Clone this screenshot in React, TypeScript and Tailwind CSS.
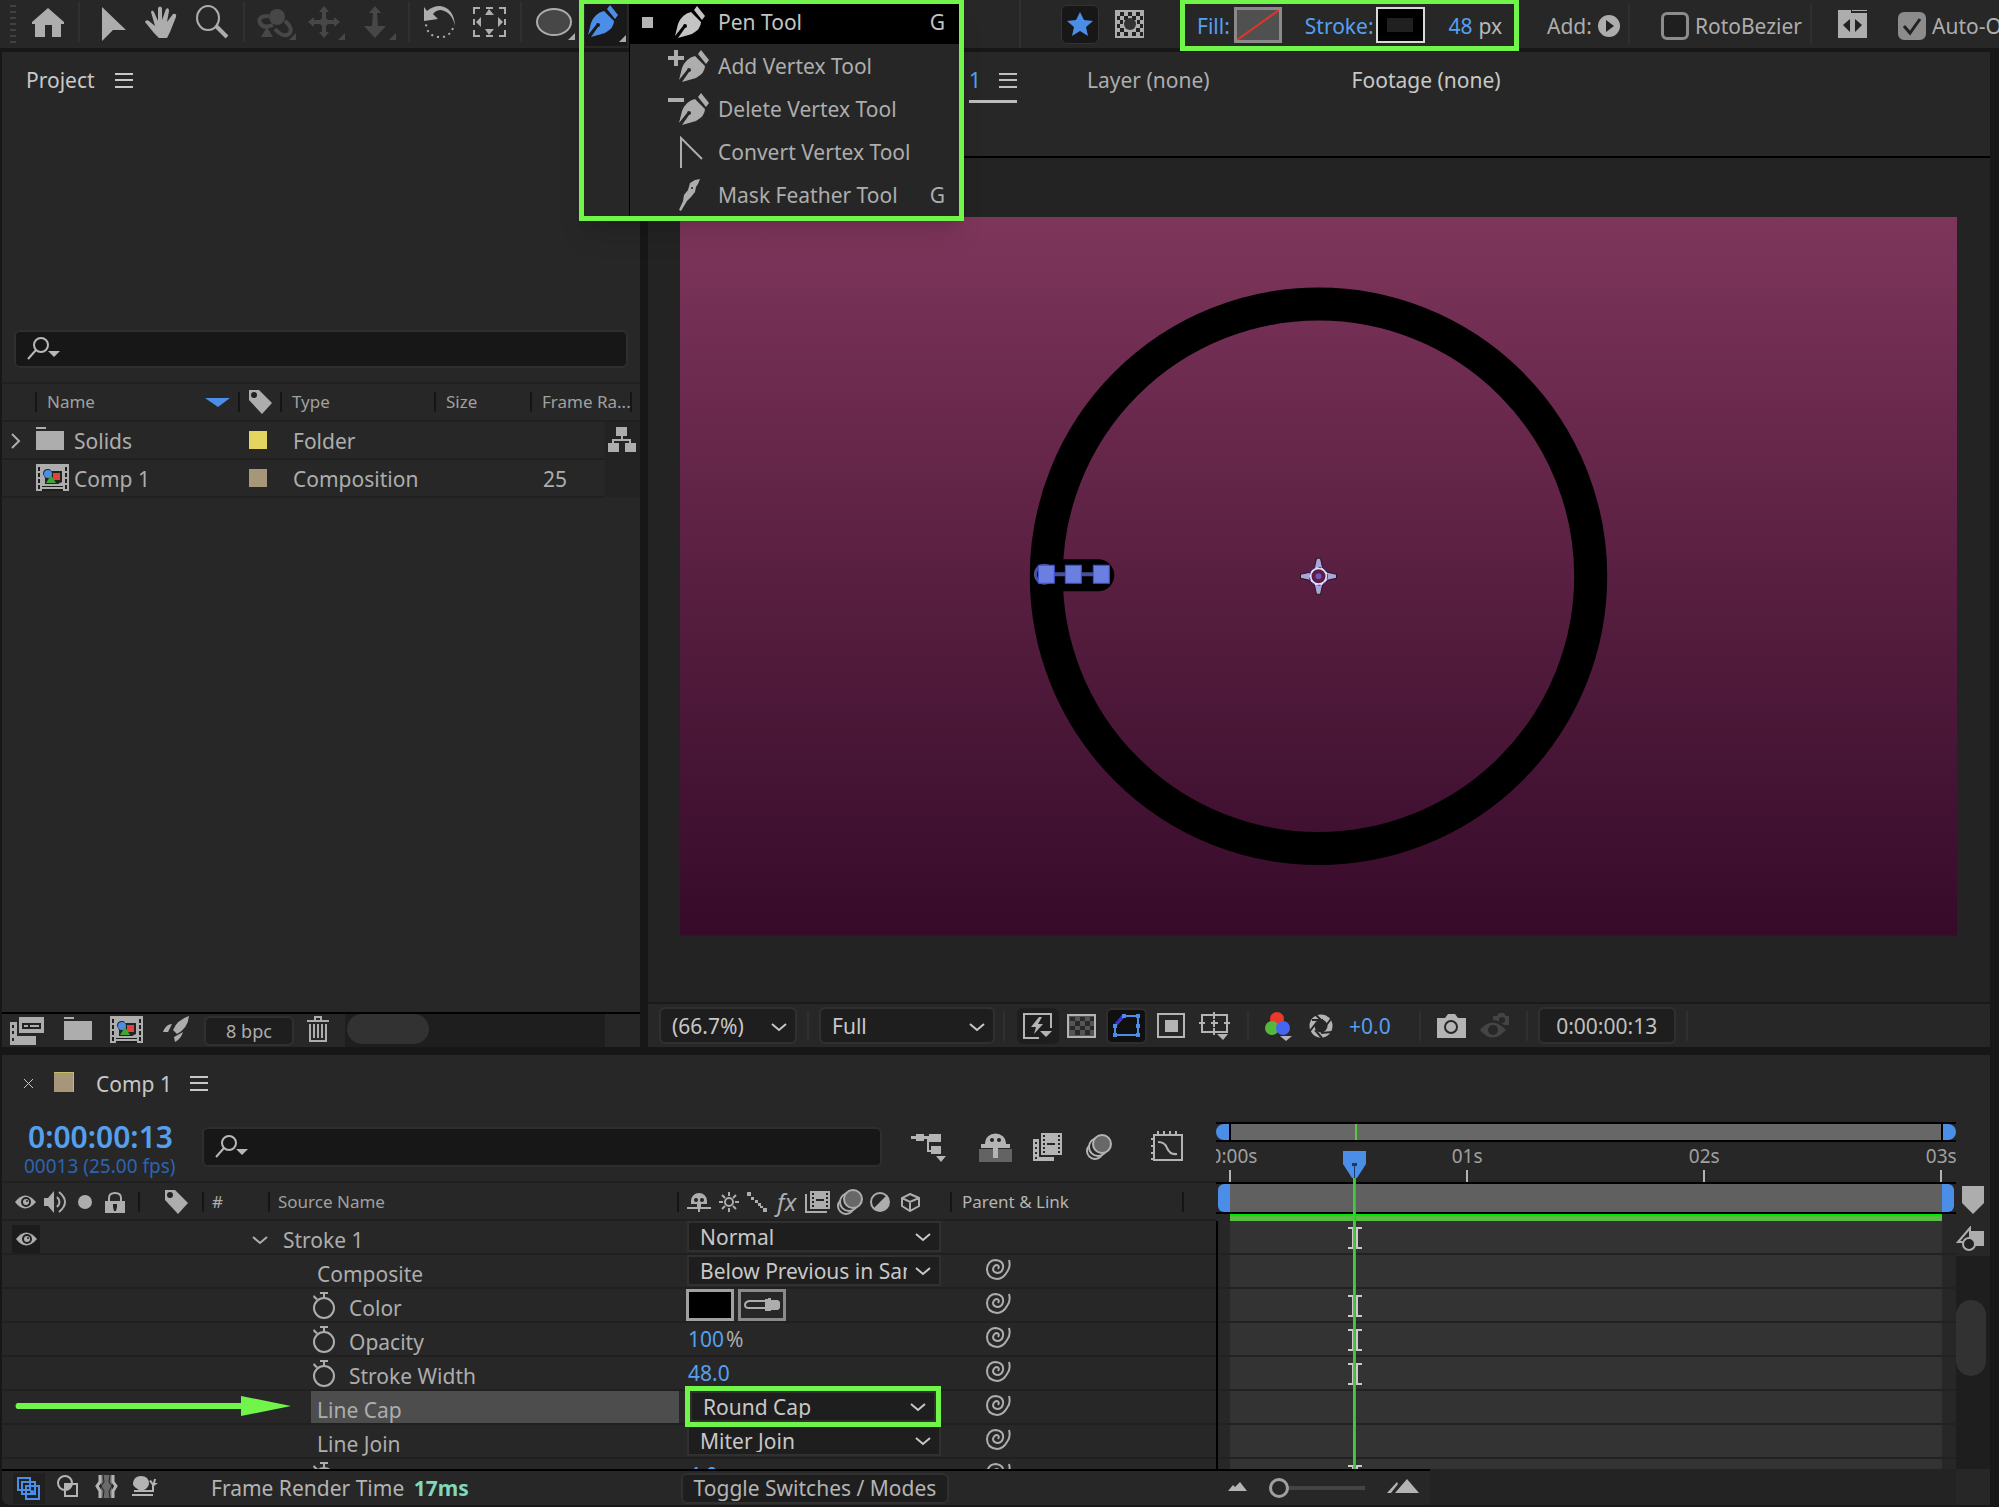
import type { ReactNode } from 'react'
import { clsx } from 'clsx'

interface IconProps {
  w: number
  h: number
  className?: string
  children: ReactNode
}

// Every glyph is drawn in its own pixel box and inherits the text colour
function Icon({ w, h, className, children }: IconProps) {
  return (
    <svg width={w} height={h} viewBox={`0 0 ${w} ${h}`} fill="currentColor" aria-hidden="true" className={clsx('block shrink-0', className)}>
      {children}
    </svg>
  )
}

function Divider({ className }: { className?: string }) {
  return <span className={clsx('w-0.5 shrink-0 bg-[#303030]', className)} />
}

const PenIcon = ({ className }: { className?: string }) => (
  <Icon w={32} h={32} className={className}>
    <path d="M20 4L23 0L31 10L28 14Z" />
    <path d="M17 6L27 16Q27 23 18 28L4 32L11 22A2 2 0 1 0 9 20L1 30L4 18Q8 8 17 6Z" />
  </Icon>
)

const FolderIcon = () => (
  <Icon w={28} h={24}>
    <path d="M0 0H10V2H0ZM0 4H28V23H0Z" />
  </Icon>
)

const CompIcon = () => (
  <Icon w={33} h={27}>
    <path d="M0 0H33V27H0Z" />
    <path d="M2 3h2v4H2zM2 9h2v4H2zM2 15h2v4H2zM2 21h2v4H2zM29 3h2v4h-2zM29 9h2v4h-2zM29 15h2v4h-2zM29 21h2v4h-2zM6 22h21v1H6zM6 25h21v2H6z" fill="#1d1d1d" />
    <path d="M15 7H26V18L22 20H9V14L7 10Q7 5 12 5Q15 5 15 7Z" fill="#222" />
    <path d="M17 9H24V16H17Z" fill="#e0453c" />
    <circle cx="12" cy="10" r="4" fill="#4a8ee6" />
    <path d="M15 11L20 19H10Z" fill="#3fa535" />
  </Icon>
)

const TagIcon = () => (
  <Icon w={25} h={24}>
    <path d="M1 0H11L24 13L14 24L1 10Z" />
    <circle cx="6" cy="5" r="3" fill="#222" />
  </Icon>
)

const EyeIcon = () => (
  <Icon w={21} h={14}>
    <path d="M0 7Q10 -6 21 7Q10 20 0 7Z" />
    <circle cx="11" cy="7" r="5" fill="#222" />
    <circle cx="11" cy="7" r="3" />
    <circle cx="12" cy="6" r="1" fill="#222" />
  </Icon>
)

const SearchIcon = () => (
  <Icon w={34} h={24}>
    <circle cx="14" cy="8" r="7" fill="none" stroke="currentColor" strokeWidth="2" />
    <path d="M9 13L1 22" stroke="currentColor" strokeWidth="2" />
    <path d="M21 14H33L27 20Z" />
  </Icon>
)

const MenuIcon = () => (
  <Icon w={18} h={15}>
    <path d="M0 0H18V2H0ZM0 6H18V8H0ZM0 13H18V15H0Z" />
  </Icon>
)

const ChevronDown = ({ className }: { className?: string }) => (
  <Icon w={16} h={10} className={className}>
    <path d="M1 2L8 8L15 2" fill="none" stroke="currentColor" strokeWidth="2" />
  </Icon>
)

const StopwatchIcon = () => (
  <Icon w={24} h={28}>
    <circle cx="12" cy="17" r="10" fill="none" stroke="currentColor" strokeWidth="2" />
    <path d="M8 1H16V3H13V7H11V3H8ZM2 4L6 8L4 9L1 6Z" />
  </Icon>
)

const SpiralIcon = () => (
  <Icon w={25} h={22}>
    <path
      d="M23 1Q25 8 21 13Q17 20 11 20Q1 19 1 10Q2 1 10 1Q18 2 17 9Q16 14 11 14Q7 13 7 10Q8 6 11 6Q14 7 12 10"
      fill="none"
      stroke="currentColor"
      strokeWidth="2"
    />
  </Icon>
)

const BlurCirclesIcon = () => (
  <Icon w={28} h={28}>
    <g stroke="currentColor" strokeWidth="2">
      <circle cx="10" cy="18" r="8" fill="#272727" />
      <circle cx="13" cy="14" r="9" fill="#272727" />
      <circle cx="17" cy="11" r="9" fill="#686868" />
    </g>
  </Icon>
)

const FramesIcon = () => (
  <Icon w={29} h={28}>
    <path d="M0 6H6V24H21V28H0ZM8 0H29V22H8Z" />
    <path d="M10 2h2v2h-2zM10 6h2v2h-2zM10 10h2v2h-2zM10 14h2v2h-2zM10 18h2v2h-2zM25 2h2v2h-2zM25 6h2v2h-2zM25 10h2v2h-2zM25 14h2v2h-2zM25 18h2v2h-2zM14 10h8v2h-8zM2 9h2v2H2zM2 14h2v2H2zM2 19h2v2H2zM2 24h2v2H2z" fill="#272727" />
  </Icon>
)

const ShyIcon = () => (
  <Icon w={24} h={20}>
    <path d="M4 12V9A8 8 0 0 1 20 9V12H14V15H24V17H13V20H11V17H0V15H10V12Z" />
    <circle cx="9" cy="8" r="2" fill="#222" />
    <circle cx="15" cy="8" r="2" fill="#222" />
  </Icon>
)

/* Toolbar */

interface ToolProps {
  label: string
  className?: string
  children: ReactNode
}

function Tool({ label, className, children }: ToolProps) {
  return (
    <button type="button" aria-label={label} className={clsx('flex h-full shrink-0 items-center justify-center', className)}>
      {children}
    </button>
  )
}

const penTools = [
  { name: 'Pen Tool', shortcut: 'G', active: true },
  { name: 'Add Vertex Tool' },
  { name: 'Delete Vertex Tool' },
  { name: 'Convert Vertex Tool' },
  { name: 'Mask Feather Tool', shortcut: 'G' },
]

function PenToolGlyph({ name }: { name: string }) {
  if (name === 'Pen Tool') return <PenIcon className="ml-1.5" />
  if (name === 'Convert Vertex Tool') {
    return (
      <Icon w={24} h={32} className="ml-3">
        <path d="M1 32V2L22 23" fill="none" stroke="currentColor" strokeWidth="2" />
      </Icon>
    )
  }
  if (name === 'Mask Feather Tool') {
    return (
      <Icon w={24} h={32} className="ml-2.5">
        <path d="M22 0L20 5L18 8L17 13L13 18L9 22L3 32L1 31L5 22L6 16L10 11L12 4L17 1Z" />
        <circle cx="14" cy="9" r="1" fill="#222" />
      </Icon>
    )
  }
  return (
    <div className="flex">
      <Icon w={16} h={32} className="-mr-1.5">
        {name === 'Add Vertex Tool' ? <path d="M6 0H10V6H16V10H10V16H6V10H0V6H6Z" /> : <path d="M0 5H16V9H0Z" />}
      </Icon>
      <PenIcon />
    </div>
  )
}

function PenMenu() {
  return (
    <div className="absolute left-0 top-0 z-20 w-[385px] border-[5px] border-t-4 border-[#72f54a] pl-[45px] shadow-xl">
      <ul role="menu" className="border-l border-black bg-[#262626]">
        {penTools.map((tool) => (
          <li key={tool.name} role="none">
            <button
              type="button"
              role="menuitem"
              className={clsx(
                'flex w-full items-center text-[21px]',
                tool.active ? 'h-10 bg-black pb-1 text-[#c4c4c4]' : 'h-[43px] text-[#adadad]',
              )}
            >
              <span className="flex w-[38px] shrink-0 justify-center">
                {tool.active && <span className="mr-1 size-[11px] bg-[#b4b4b4]" />}
              </span>
              <span className="w-[50px] shrink-0">
                <PenToolGlyph name={tool.name} />
              </span>
              <span className="flex-1 text-left">{tool.name}</span>
              <span className="mr-3.5">{tool.shortcut}</span>
            </button>
          </li>
        ))}
      </ul>
    </div>
  )
}

const Corner = ({ className }: { className?: string }) => (
  <Icon w={7} h={7} className={clsx('mb-2 self-end', className)}>
    <path d="M7 0V7H0Z" />
  </Icon>
)

function Checkbox({ id, label, checked }: { id: string; label: string; checked?: boolean }) {
  return (
    <div className="flex shrink-0 items-center pt-1">
      <span className="relative flex">
        <input
          id={id}
          type="checkbox"
          defaultChecked={checked}
          className="peer size-7 appearance-none rounded-md border-[3px] border-[#8c8c8c] bg-[#1f1f1f] checked:bg-[#8c8c8c]"
        />
        <svg viewBox="0 0 28 28" className="pointer-events-none absolute inset-0 hidden size-7 peer-checked:block" aria-hidden="true">
          <path d="M6 14L12 21L22 7" fill="none" stroke="#222" strokeWidth="3" />
        </svg>
      </span>
      <label htmlFor={id} className="ml-1.5 whitespace-nowrap">
        {label}
      </label>
    </div>
  )
}

function Toolbar() {
  return (
    <header className="relative flex h-12 shrink-0 items-center overflow-visible bg-[#272727] text-[21px] text-[#adadad]">
      <Icon w={6} h={38} className="ml-2.5 text-[#414141]">
        <path d="M0 1H6M0 7H6M0 13H6M0 19H6M0 25H6M0 31H6M0 37H6" stroke="currentColor" strokeWidth="2" />
      </Icon>
      <Tool label="Home" className="ml-4 w-8">
        <Icon w={32} h={29} className="-mt-1">
          <path d="M16 0L32 14V16H29V29H20V17H13V29H3V16H0V14Z" />
        </Icon>
      </Tool>
      <Divider className="mb-1 ml-3.5 h-10" />
      <Tool label="Selection Tool" className="ml-[21px] w-[26px]">
        <Icon w={26} h={34}>
          <path d="M1 0L25 23H12L1 34Z" />
        </Icon>
      </Tool>
      <Tool label="Hand Tool" className="ml-[18px] w-8">
        <Icon w={32} h={32} className="-mt-1">
          <path d="M14 32L9 27L0 16Q1 13 4 15L10 20L6 6Q7 3 9 6L13 15V2Q15 -1 17 2V14L21 3Q24 1 24 5L22 16L28 8Q32 7 31 11L25 26L22 32Z" />
        </Icon>
      </Tool>
      <Tool label="Zoom Tool" className="ml-[18px] w-[34px]">
        <Icon w={34} h={34} className="-mt-1">
          <ellipse cx="13" cy="13" rx="11" ry="12" fill="none" stroke="currentColor" strokeWidth="2" />
          <path d="M21 21L32 32" stroke="currentColor" strokeWidth="4" />
        </Icon>
      </Tool>
      <Divider className="mb-1 ml-3.5 h-10" />
      <div className="flex h-full text-[#474747]">
        <Tool label="Orbit Tool" className="ml-3 w-9">
          <Icon w={36} h={30}>
            <circle cx="20" cy="8" r="8" />
            <path d="M12 7Q0 7 3 14Q6 20 16 16M28 12Q37 20 32 25Q26 29 18 20" fill="none" stroke="currentColor" strokeWidth="4" />
            <path d="M10 18L16 28H4Z" />
          </Icon>
        </Tool>
        <Corner className="-ml-1" />
        <Tool label="Pan Camera Tool" className="ml-2.5 w-9">
          <Icon w={32} h={32} className="-mt-1">
            <path d="M16 0L21 6H18V12Q20 14 20 14H26V11L32 16L26 21V18H20Q18 20 18 20V26H21L16 32L11 26H14V20L12 18H6V21L0 16L6 11V14H12L14 12V6H11Z" />
          </Icon>
        </Tool>
        <Corner className="-ml-1" />
        <Tool label="Dolly Tool" className="ml-3 w-9">
          <Icon w={22} h={32} className="-mt-1">
            <path d="M11 0L17 7H13L14 20H22L11 32L0 20H8L9 7H5Z" />
          </Icon>
        </Tool>
        <Corner className="-ml-1" />
      </div>
      <Divider className="mb-1 ml-3 h-10" />
      <Tool label="Rotate Tool" className="ml-3 w-[34px]">
        <Icon w={33} h={33} className="-mt-1">
          <path d="M1 1L4 5Q10 0 17 0Q31 2 32 20Q29 6 18 4Q13 4 10 8L15 13L1 15Z" />
          <path d="M30 22Q26 32 16 31Q4 30 3 18" fill="none" stroke="currentColor" strokeWidth="2" strokeDasharray="2 4" />
        </Icon>
      </Tool>
      <Tool label="Pan Behind Tool" className="ml-4 w-[34px]">
        <Icon w={33} h={30} className="-mt-1">
          <path d="M1 7V1H7M13 1H20M26 1H32V7M32 12V18M32 23V29H26M20 29H13M7 29H1V23M1 18V12" fill="none" stroke="currentColor" strokeWidth="2" />
          <path d="M16 2L21 8H12ZM16 28L21 22H12ZM3 15L8 10V20ZM30 15L25 10V20Z" />
        </Icon>
      </Tool>
      <Divider className="mb-1 ml-3.5 h-10" />
      <Tool label="Ellipse Tool" className="ml-3.5 w-9">
        <Icon w={36} h={30} className="-mt-1">
          <ellipse cx="18" cy="15" rx="17" ry="13" fill="#474747" stroke="currentColor" strokeWidth="2" />
        </Icon>
      </Tool>
      <Corner className="-ml-1" />

      {/* Pen tool with its flyout open */}
      <div className="relative ml-1 h-full w-[440px]">
        <div className="ml-1.5 flex h-[46px] w-[42px] items-center bg-[#191919] pb-1 pl-0.5 text-[#4b8ee8]">
          <PenIcon />
          <Corner className="mb-0! text-[#aaa]" />
        </div>
        <PenMenu />
      </div>
      <Divider className="h-full" />

      <Tool label="Snapping" className="ml-10 w-[38px]">
        <span className="flex h-[39px] w-full items-center justify-center rounded-md border border-[#333] bg-[#171717] text-[#4b8ee8]">
          <Icon w={26} h={24}>
            <path d="M13 0L17 8L26 9L19 15L21 24L13 19L5 24L7 15L0 9L9 8Z" />
          </Icon>
        </span>
      </Tool>
      <Tool label="Snap to features" className="ml-4 w-[29px]">
        <Icon w={29} h={28}>
          <path d="M0 0H29V28H0Z" />
          <path d="M5 2h4v4H5zM13 2h4v4h-4zM21 2h4v4h-4zM2 6h3v4H2zM9 6h4v4H9zM17 6h4v4h-4zM25 6h3v4h-3zM5 10h3v4H5zM22 10h3v4h-3zM2 14h3v4H2zM25 14h3v4h-3zM5 18h4v4H5zM21 18h4v4h-4zM9 22h4v4H9zM17 22h4v4h-4zM25 22h3v4h-3zM2 22h3v4H2z" fill="#222" />
          <circle cx="15" cy="14" r="6" fill="#333" />
        </Icon>
      </Tool>

      <div className="z-10 ml-9 mb-[-3px] flex h-[51px] w-[339px] shrink-0 items-center border-[5px] border-t-4 border-[#72f54a] pl-3 pt-px text-[#55a0ee]">
        <button type="button">Fill:</button>
        <button type="button" aria-label="Fill colour" className="mb-0.5 ml-1 border-[3px] border-[#8a8a8a] bg-[#505050]">
          <svg viewBox="0 0 42 30" className="block h-[30px] w-[42px]" aria-hidden="true">
            <path d="M0 30L42 0" stroke="#e0352b" strokeWidth="2" />
          </svg>
        </button>
        <button type="button" className="ml-[23px]">
          Stroke:
        </button>
        <button type="button" aria-label="Stroke colour" className="mb-0.5 ml-0.5 flex h-9 w-[49px] items-center justify-center border-2 border-[#dadada] bg-black">
          <span className="h-3.5 w-[26px] bg-[#202020]" />
        </button>
        <button type="button" className="ml-6">
          48
        </button>
        <span className="ml-1.5 text-[#b8b8b8]">px</span>
      </div>

      <span className="ml-7 pt-1">Add:</span>
      <Tool label="Add" className="ml-1.5 w-[22px] pt-1">
        <Icon w={22} h={22}>
          <circle cx="11" cy="11" r="11" />
          <path d="M8 5L16 11L8 17Z" fill="#222" />
        </Icon>
      </Tool>
      <Divider className="ml-2 h-10" />
      <div className="ml-[31px]">
        <Checkbox id="rotobezier" label="RotoBezier" />
      </div>
      <Divider className="ml-2 h-10" />
      <Tool label="Mirror" className="ml-[26px] w-[29px]">
        <Icon w={29} h={28}>
          <path d="M0 0H13V3H29V28H0ZM14 0H29V1H14Z" />
          <path d="M12 9V22L5 15ZM17 9L24 15L17 22Z" fill="#222" />
        </Icon>
      </Tool>
      <div className="ml-[31px] min-w-0 flex-1 overflow-hidden">
        <Checkbox id="auto-open" label="Auto-Open Panels" checked />
      </div>
    </header>
  )
}

/* Project panel */

function SearchBox({ label, className }: { label: string; className?: string }) {
  return (
    <div className={clsx('flex items-center rounded-md border-2 border-[#2e2e2e] bg-[#171717] pl-[11px] text-[#b8b8b8]', className)}>
      <SearchIcon />
      <input type="search" aria-label={label} className="h-full min-w-0 flex-1 bg-transparent px-2 text-[21px] outline-none" />
    </div>
  )
}

const projectItems = [
  { name: 'Solids', type: 'Folder', rate: '', swatch: 'bg-[#e2d661]', folder: true },
  { name: 'Comp 1', type: 'Composition', rate: '25', swatch: 'bg-[#a69779]', folder: false },
]

function ProjectPanel() {
  return (
    <section className="flex w-[638px] shrink-0 flex-col bg-[#272727] text-[#adadad]">
      <div className="flex h-[56px] items-center gap-5 pl-6 text-[21px] text-[#c8c8c8]">
        <h2>Project</h2>
        <button type="button" aria-label="Project panel menu">
          <MenuIcon />
        </button>
      </div>
      <SearchBox label="Search project" className="ml-3 mr-3 mt-[222px] h-[38px] shrink-0" />
      <div className="mt-3.5 flex flex-1">
        <table className="h-fit w-full table-fixed border-collapse text-left text-[21px]">
          <colgroup>
            <col className="w-[33px]" />
            <col className="w-[203px]" />
            <col className="w-[42px]" />
            <col className="w-[154px]" />
            <col className="w-[96px]" />
            <col className="w-[75px]" />
            <col />
          </colgroup>
          <thead>
            <tr className="h-[38px] border-y-2 border-[#202020] text-[17px] text-[#a0a0a0] *:p-0 *:font-normal">
              <th />
              <th>
                <div className="flex h-5 items-center justify-between border-l-2 border-[#151515] pl-2.5 pr-2">
                  Name
                  <Icon w={25} h={9} className="text-[#4b8ee8]">
                    <path d="M0 0H25L13 9Z" />
                  </Icon>
                </div>
              </th>
              <th>
                <div className="flex h-5 items-center border-l-2 border-[#151515] pl-2 text-[#adadad]">
                  <TagIcon />
                </div>
              </th>
              <th>
                <div className="flex h-5 items-center border-l-2 border-[#151515] pl-2.5">Type</div>
              </th>
              <th>
                <div className="flex h-5 items-center border-l-2 border-[#151515] pl-2.5">Size</div>
              </th>
              <th colSpan={2}>
                <div className="mr-2 flex h-5 items-center whitespace-nowrap border-x-2 border-[#151515] pl-2.5">Frame Ra...</div>
              </th>
            </tr>
          </thead>
          <tbody>
            {projectItems.map((item) => (
              <tr key={item.name} className="h-[38px] *:border-b-2 *:border-[#202020] *:p-0 *:pt-0.5">
                <td>
                  {item.folder && (
                    <button type="button" aria-label="Expand Solids" className="ml-[9px] block">
                      <Icon w={10} h={16}>
                        <path d="M1 1L8 8L1 15" fill="none" stroke="currentColor" strokeWidth="2" />
                      </Icon>
                    </button>
                  )}
                </td>
                <td>
                  <div className="flex items-center pl-px">
                    <span className="mb-1 flex w-[38px]">{item.folder ? <FolderIcon /> : <CompIcon />}</span>
                    {item.name}
                  </div>
                </td>
                <td>
                  <span className={clsx('mb-0.5 ml-[11px] block size-[18px]', item.swatch)} />
                </td>
                <td className="whitespace-nowrap">
                  <span className="ml-[13px]">{item.type}</span>
                </td>
                <td />
                <td>
                  <span className="ml-[13px]">{item.rate}</span>
                </td>
                <td className="border-none! bg-[#232323]">
                  {item.folder && (
                    <Icon w={28} h={25} className="mb-1 ml-[3px]">
                      <path d="M8 0H19V9H8ZM0 16H11V25H0ZM17 16H28V25H17Z" />
                      <path d="M14 8V12M5 17V13H22V17" fill="none" stroke="currentColor" strokeWidth="2" />
                    </Icon>
                  )}
                </td>
              </tr>
            ))}
          </tbody>
        </table>
      </div>
      <div className="flex h-[35px] shrink-0 border-t-2 border-black">
        <div className="flex w-[343px] items-center pl-2">
          <Icon w={34} h={28}>
            <path d="M9 0H34V16H9ZM0 5H7V19H26V28H0Z" />
            <path d="M12 6H31V12H12ZM2 8h2v3H2zM2 14h2v3H2zM2 21h2v3H2z" fill="#222" />
            <path d="M14 8H18V10H14ZM20 8H29V10H20Z" />
          </Icon>
          <span className="mb-1 ml-5">
            <FolderIcon />
          </span>
          <span className="mb-0.5 ml-[18px]">
            <CompIcon />
          </span>
          <Icon w={27} h={26} className="mb-1 ml-5">
            <path d="M26 0Q25 12 14 18L10 14Q14 4 26 0ZM9 8L5 16H0Q3 8 9 8ZM20 16Q18 23 12 26L11 21Z" />
          </Icon>
          <button type="button" className="ml-3.5 h-[30px] w-[90px] rounded-md border-2 border-[#303030] bg-[#1e1e1e] text-[18px] leading-none">
            8 bpc
          </button>
          <Icon w={22} h={26} className="mb-1 ml-[13px]">
            <path d="M0 4H7V0H15V4H22V6H0ZM9 2V4H13V2ZM2 8H4V24H18V8H20V26H2ZM6 8H8V22H6ZM10 8H12V22H10ZM14 8H16V22H14Z" fillRule="evenodd" />
          </Icon>
        </div>
        <div className="flex-1 bg-[#1e1e1e]">
          <div className="ml-0.5 h-[30px] w-[82px] rounded-full bg-[#323232]" />
        </div>
        <div className="w-[35px]" />
      </div>
    </section>
  )
}

/* Viewer */

function Composition() {
  return (
    <svg viewBox="0 0 1276 718" className="block w-full" role="img" aria-label="Composition view">
      <defs>
        <linearGradient id="backdrop" x1="0" y1="0" x2="0" y2="1">
          <stop offset="0" stopColor="#7e365b" />
          <stop offset="0.25" stopColor="#6b2a4e" />
          <stop offset="0.5" stopColor="#591f41" />
          <stop offset="0.75" stopColor="#471535" />
          <stop offset="1" stopColor="#370a2a" />
        </linearGradient>
      </defs>
      <rect width="1276" height="718" fill="url(#backdrop)" />
      <circle cx="638" cy="359" r="272" fill="none" stroke="#000" strokeWidth="33" />
      <path d="M366 358H418" stroke="#000" strokeWidth="32" strokeLinecap="round" />
      {/* selected path vertices */}
      <circle cx="364" cy="357" r="9" fill="none" stroke="#4a5590" strokeWidth="3" />
      <path d="M366 357H420" stroke="#46519a" strokeWidth="4" />
      <path d="M358 348H374V366H358ZM385 348H401V366H385ZM413 348H429V366H413Z" fill="#6b7fe0" stroke="#3f4fe0" />
      {/* anchor point */}
      <g transform="translate(638 359)">
        <path d="M-2 -18H2L4 -9L9 -4L18 -2V2L9 4L4 9L2 18H-2L-4 9L-9 4L-18 2V-2L-9 -4L-4 -9Z" fill="#a9a6d8" stroke="#2b1626" />
        <circle r="8" fill="#5a1f44" stroke="#e9e4f4" strokeWidth="2" />
        <circle r="9" fill="none" stroke="#5a35c8" strokeDasharray="3 3" />
        <circle r="3" fill="#7353b8" />
      </g>
    </svg>
  )
}

function Dropdown({ label, options, className }: { label: string; options: string[]; className?: string }) {
  return (
    <span className={clsx('relative flex shrink-0', className)}>
      <select
        aria-label={label}
        className="size-full appearance-none rounded-[inherit] border-2 border-[#303030] bg-[#1e1e1e] pl-[11px] pr-8 pt-0.5 text-[21px] leading-none text-[#c8c8c8]"
      >
        {options.map((option) => (
          <option key={option}>{option}</option>
        ))}
      </select>
      <ChevronDown className="pointer-events-none absolute right-2.5 top-1/2 -mt-1 text-[#c8c8c8]" />
    </span>
  )
}

function ViewerControls() {
  return (
    <div className="flex h-[45px] shrink-0 items-center overflow-hidden border-t-2 border-[#1a1a1a] pl-[11px] text-[21px] text-[#b4b4b4]">
      <Dropdown label="Magnification" options={['(66.7%)', '50%', '100%']} className="h-[37px] w-[138px] rounded-md" />
      <Divider className="mx-2.5 h-[30px]" />
      <Dropdown label="Resolution" options={['Full', 'Half', 'Third']} className="h-[37px] w-[176px] rounded-md" />
      <Divider className="ml-2 mr-3 h-[30px]" />
      <button type="button" aria-label="Fast previews" className="flex h-9 w-[42px] items-center justify-center rounded-md bg-[#1e1e1e]">
        <Icon w={30} h={26}>
          <path d="M28 15V1H1V25H16" fill="none" stroke="currentColor" strokeWidth="2" />
          <path d="M16 4L8 14H13L11 21L20 11H15L19 4ZM17 18H29L23 24Z" />
        </Icon>
      </button>
      <button type="button" aria-label="Transparency grid" className="ml-2">
        <Icon w={29} h={24}>
          <path d="M1 1H28V23H1Z" fill="#555" stroke="currentColor" strokeWidth="2" />
          <path d="M3 3h5v4H3zM13 3h5v4h-5zM23 3h4v4h-4zM8 7h5v5H8zM18 7h5v5h-5zM3 12h5v4H3zM13 12h5v4h-5zM23 12h4v4h-4zM8 16h5v5H8zM18 16h5v5h-5z" fill="#2a2a2a" />
        </Icon>
      </button>
      <button type="button" aria-label="Mask visibility" className="ml-2.5 flex h-9 w-[41px] items-center justify-center rounded-md border-2 border-[#2e2e2e] bg-[#101010]">
        <Icon w={29} h={26} className="text-[#4b8ee8]">
          <path d="M12 3H26V22H3V13Z" fill="none" stroke="currentColor" strokeWidth="2" />
          <path d="M4 11L11 3" stroke="#3a30d8" strokeWidth="3" />
          <path d="M10 1h4v4h-4zM24 1h4v4h-4zM24 11h4v4h-4zM1 11h4v4H1zM1 20h4v4H1zM24 20h4v4h-4z" />
        </Icon>
      </button>
      <button type="button" aria-label="Region of interest" className="ml-2.5">
        <Icon w={28} h={25}>
          <path d="M1 1H27V24H1Z" fill="none" stroke="currentColor" strokeWidth="2" />
          <path d="M8 7H21V19H8Z" />
        </Icon>
      </button>
      <button type="button" aria-label="Grid and guides" className="ml-3.5">
        <Icon w={32} h={28}>
          <path d="M3 3H28V20H3ZM15 0V7M15 16V23M0 11H6M25 11H31M12 11H19M15 8V15" fill="none" stroke="currentColor" strokeWidth="2" />
          <path d="M18 22H29L24 28Z" />
        </Icon>
      </button>
      <Divider className="mx-4 h-[30px]" />
      <button type="button" aria-label="Channels">
        <Icon w={28} h={30}>
          <circle cx="12" cy="8" r="7" fill="#e8392a" />
          <circle cx="7" cy="17" r="7" fill="#55b83c" />
          <circle cx="18" cy="17" r="7" fill="#4666f0" />
          <path d="M15 25H27L21 30Z" />
        </Icon>
      </button>
      <button type="button" aria-label="Reset exposure" className="ml-4">
        <Icon w={24} h={26}>
          <circle cx="12" cy="13" r="9" fill="none" stroke="currentColor" strokeWidth="5" />
          <path d="M6 1L14 9M22 6L15 15M23 19L12 20M13 25L6 17M1 18L8 9M3 7L14 7" stroke="#272727" strokeWidth="2" />
        </Icon>
      </button>
      <button type="button" className="ml-4 pt-px text-[#55a0ee]">
        +0.0
      </button>
      <Divider className="ml-7 h-[30px]" />
      <button type="button" aria-label="Take snapshot" className="ml-4">
        <Icon w={29} h={24}>
          <path d="M0 4H8L11 0H18L21 4H29V24H0Z" />
          <circle cx="14" cy="13" r="6" fill="none" stroke="#272727" strokeWidth="2" />
        </Icon>
      </button>
      <button type="button" aria-label="Show snapshot" className="ml-3.5 text-[#444]">
        <Icon w={30} h={26}>
          <path d="M0 17Q12 2 26 17Q12 32 0 17Z" />
          <circle cx="13" cy="17" r="5" fill="#272727" />
          <path d="M13 3H17L19 0H24L26 3H29V12H24Q18 7 13 7Z" />
          <circle cx="22" cy="7" r="3" fill="#272727" />
        </Icon>
      </button>
      <Divider className="ml-4 mr-2.5 h-[30px]" />
      <button type="button" className="h-[37px] w-[138px] shrink-0 rounded-md border-2 border-[#303030] bg-[#1e1e1e] pt-px leading-none text-[#c0c0c0]">
        0:00:00:13
      </button>
      <Divider className="ml-2.5 h-[30px]" />
    </div>
  )
}

function Viewer() {
  return (
    <section className="flex min-w-0 flex-1 flex-col bg-[#272727] text-[21px] text-[#adadad]">
      <div className="flex h-[104px] items-start">
        <div className="ml-[321px] flex h-[51px] items-center gap-[18px] border-b-[3px] border-[#bcbcbc] pt-2 text-[#55a0ee]">
          1
          <button type="button" aria-label="Composition panel menu" className="text-[#c0c0c0]">
            <MenuIcon />
          </button>
        </div>
        <button type="button" className="ml-[70px] mt-3.5">
          Layer (none)
        </button>
        <button type="button" className="ml-[142px] mt-3.5 text-[#c8c8c8]">
          Footage (none)
        </button>
      </div>
      <div className="flex-1 border-t-2 border-black bg-[#232323] pl-8 pr-[33px] pt-[59px]">
        <Composition />
      </div>
      <ViewerControls />
    </section>
  )
}

/* Timeline */

interface Property {
  name: string
  indent: string
  value: ReactNode
  stopwatch?: boolean
  group?: boolean
  selected?: boolean
  keyframe?: boolean
}

const selectBox = 'h-[31px] w-[254px] ml-px mb-0.5'

const properties: Property[] = [
  {
    name: 'Stroke 1',
    indent: 'pl-[250px]',
    group: true,
    keyframe: true,
    value: <Dropdown label="Blending mode" options={['Normal', 'Multiply']} className={selectBox} />,
  },
  {
    name: 'Composite',
    indent: 'pl-[315px]',
    value: <Dropdown label="Composite" options={['Below Previous in Same Group', 'Above Previous in Same Group']} className={selectBox} />,
  },
  {
    name: 'Color',
    indent: 'pl-[310px]',
    stopwatch: true,
    keyframe: true,
    value: (
      <div className="flex gap-1">
        <button type="button" aria-label="Stroke color" className="h-8 w-12 border-[3px] border-[#a0a0a0] bg-black" />
        <button type="button" aria-label="Eyedropper" className="flex h-8 w-12 items-center justify-center border-[3px] border-[#8a8a8a]">
          <Icon w={36} h={14}>
            <path d="M22 3H5Q1 4 1 7Q1 10 5 10H22" fill="none" stroke="currentColor" strokeWidth="2" />
            <path d="M21 1H24V0H27V2H34L36 4V10L34 12H27V13H21Z" />
          </Icon>
        </button>
      </div>
    ),
  },
  {
    name: 'Opacity',
    indent: 'pl-[310px]',
    stopwatch: true,
    keyframe: true,
    value: (
      <span className="ml-0.5">
        <button type="button" className="mr-0.5 text-[#55a0ee]">
          100
        </button>
        %
      </span>
    ),
  },
  {
    name: 'Stroke Width',
    indent: 'pl-[310px]',
    stopwatch: true,
    keyframe: true,
    value: (
      <button type="button" className="ml-0.5 text-[#55a0ee]">
        48.0
      </button>
    ),
  },
  {
    name: 'Line Cap',
    indent: 'pl-[309px]',
    selected: true,
    value: (
      <Dropdown
        label="Line cap"
        options={['Round Cap', 'Butt Cap', 'Projecting Cap']}
        className="z-10 mb-0.5 ml-1 h-[31px] w-[246px] outline-[5px] outline-[#72f54a]"
      />
    ),
  },
  {
    name: 'Line Join',
    indent: 'pl-[315px]',
    value: <Dropdown label="Line join" options={['Miter Join', 'Round Join', 'Bevel Join']} className={selectBox} />,
  },
  {
    name: 'Miter Limit',
    indent: 'pl-[310px]',
    stopwatch: true,
    keyframe: true,
    value: (
      <button type="button" className="ml-0.5 text-[#55a0ee]">
        4.0
      </button>
    ),
  },
]

function PropertyRow({ property }: { property: Property }) {
  const { name, indent, value, stopwatch, group, selected } = property
  return (
    <div className="relative flex h-[34px] shrink-0 items-center border-b-2 border-[#202020] text-[21px]">
      {group && (
        <button type="button" aria-label="Toggle visibility" className="absolute left-2.5 top-1 flex h-7 w-7 items-center justify-center bg-[#1c1c1c]">
          <EyeIcon />
        </button>
      )}
      {selected && (
        <svg viewBox="0 0 278 22" className="absolute left-3 top-1 h-[22px] w-[278px] text-[#72f54a]" aria-hidden="true">
          <path d="M3 8H227V1L277 11L227 21V14H3Q0 11 3 8Z" fill="currentColor" />
        </svg>
      )}
      <div className={clsx('flex h-full w-[684px] shrink-0 items-center', indent)}>
        <div className={clsx('flex flex-1 items-center pt-1.5', selected && 'mr-[7px] h-8 bg-[#4d4d4d] pl-1.5')}>
          {group && <ChevronDown className="mr-[15px]" />}
          {stopwatch && (
            <button type="button" aria-label={`Animate ${name}`} className="mb-1.5 mr-[13px]">
              <StopwatchIcon />
            </button>
          )}
          {name}
        </div>
      </div>
      <div className="w-[300px] shrink-0">{value}</div>
      {!group && (
        <button type="button" aria-label={`Pick parent for ${name}`} className="mb-0.5">
          <SpiralIcon />
        </button>
      )}
    </div>
  )
}

function TimelineTop() {
  return (
    <div className="h-[126px] shrink-0">
      <div className="flex h-[57px] items-center text-[21px] text-[#c8c8c8]">
        <button type="button" aria-label="Close Comp 1" className="ml-[21px]">
          <Icon w={11} h={11}>
            <path d="M1 1L10 10M10 1L1 10" stroke="currentColor" />
          </Icon>
        </button>
        <span className="mb-1 ml-5 size-5 border-t border-r border-[#c9ba68] bg-[#a69779]" />
        <h2 className="ml-[22px]">Comp 1</h2>
        <button type="button" aria-label="Timeline panel menu" className="ml-[18px]">
          <MenuIcon />
        </button>
      </div>
      <div className="flex h-[69px] items-center text-[#b4b4b4]">
        <div className="w-[200px] shrink-0 pt-1">
          <button type="button" className="ml-[26px] block text-[30px]/[34px] font-semibold text-[#55a0ee]">
            0:00:00:13
          </button>
          <p className="ml-[22px] text-[19px]/[24px] whitespace-nowrap text-[#2d64b0]">00013 (25.00 fps)</p>
        </div>
        <SearchBox label="Search timeline" className="h-10 w-[680px] shrink-0" />
        <button type="button" aria-label="Mini-flowchart" className="ml-[29px]">
          <Icon w={35} h={30}>
            <path d="M0 4H5V2H13V4H18V2H30V10H18V7H13V9H5V7H0ZM16 7H18V18H22V20H16ZM20 14H30V22H20ZM25 24H35L30 30Z" />
          </Icon>
        </button>
        <button type="button" aria-label="Hide shy layers" className="ml-[33px]">
          <Icon w={33} h={30}>
            <path d="M0 17H33V30H0Z" fill="#636363" />
            <path d="M6 11A10 9 0 0 1 27 11V12H31V16H19V26H14V16H2V12H6Z" />
            <circle cx="13" cy="8" r="2" fill="#222" />
            <circle cx="20" cy="8" r="2" fill="#222" />
          </Icon>
        </button>
        <button type="button" aria-label="Frame blending" className="ml-[21px]">
          <FramesIcon />
        </button>
        <button type="button" aria-label="Motion blur" className="ml-[23px]">
          <BlurCirclesIcon />
        </button>
        <button type="button" aria-label="Graph editor" className="ml-[38px]">
          <Icon w={33} h={31}>
            <path d="M3 4H31V29H3ZM7 3V0M13 3V0M19 3V0M25 3V0M0 8H3M0 15H3M0 22H3M0 28H3" fill="none" stroke="currentColor" strokeWidth="2" />
            <path d="M7 11Q14 11 16 17Q19 24 26 23" fill="none" stroke="currentColor" strokeWidth="2" />
          </Icon>
        </button>
      </div>
    </div>
  )
}

function ColumnHeader() {
  return (
    <div className="flex h-10 shrink-0 items-center border-y-2 border-[#202020] pt-0.5 text-[17px] text-[#adadad]">
      <div className="flex w-[136px] shrink-0 items-center pl-[13px]">
        <EyeIcon />
        <Icon w={24} h={22} className="ml-2">
          <path d="M0 7H4L10 0V22L4 15H0Z" />
          <path d="M13 6Q18 11 13 16M15 1Q27 11 15 21" fill="none" stroke="currentColor" strokeWidth="2" />
        </Icon>
        <Icon w={14} h={14} className="ml-2.5">
          <circle cx="7" cy="7" r="7" />
        </Icon>
        <Icon w={20} h={21} className="ml-[13px]">
          <path d="M0 9H20V21H0Z" />
          <path d="M4 10V6Q4 1 10 1Q16 1 16 6V10" fill="none" stroke="currentColor" strokeWidth="2" />
          <path d="M8 12H12V15L11 19H9L8 15Z" fill="#222" />
        </Icon>
      </div>
      <div className="flex h-5 w-[64px] shrink-0 items-center border-l-2 border-[#151515] pl-6">
        <TagIcon />
      </div>
      <div className="flex h-5 w-[66px] shrink-0 items-center border-l-2 border-[#151515] pl-2">#</div>
      <div className="flex h-5 w-[409px] shrink-0 items-center border-l-2 border-[#151515] pl-2 text-[#a0a0a0]">Source Name</div>
      <div className="flex h-5 w-[273px] shrink-0 items-center border-l-2 border-[#151515] pl-2">
        <ShyIcon />
        <Icon w={20} h={20} className="ml-2">
          <circle cx="10" cy="10" r="4" fill="none" stroke="currentColor" strokeWidth="2" />
          <path d="M10 0V4M10 16V20M0 10H4M16 10H20M3 3L6 6M14 14L17 17M17 3L14 6M6 14L3 17" stroke="currentColor" strokeWidth="2" />
        </Icon>
        <Icon w={20} h={20} className="ml-2">
          <path d="M0 0h4v4H0zM4 5h3v3H4zM8 8h3v3H8zM11 11h3v3h-3zM16 16h4v4h-4zM13 14h3v2h-3z" />
        </Icon>
        <span className="ml-2.5 w-6 text-[24px] leading-none italic">fx</span>
        <Icon w={25} h={22} className="ml-1">
          <path d="M0 3H2V20H22V22H0ZM5 0H25V18H5Z" />
          <path d="M7 2h2v2H7zM7 6h2v2H7zM7 10h2v2H7zM7 14h2v2H7zM21 2h2v2h-2zM21 6h2v2h-2zM21 10h2v2h-2zM21 14h2v2h-2zM11 8h8v2h-8z" fill="#222" />
        </Icon>
        <span className="ml-1.5">
          <BlurCirclesIcon />
        </span>
        <Icon w={21} h={21} className="ml-1.5">
          <circle cx="10" cy="10" r="9" fill="none" stroke="currentColor" strokeWidth="2" />
          <path d="M17 3A10 10 0 0 1 3 17Z" />
        </Icon>
        <Icon w={19} h={19} className="ml-2.5">
          <path d="M9 1L18 5V13L9 18L1 13V5ZM1 5L9 9L18 5M9 9V18" fill="none" stroke="currentColor" strokeWidth="2" />
        </Icon>
      </div>
      <div className="flex h-5 w-[234px] shrink-0 items-center border-x-2 border-[#151515] pl-2.5 text-[#b4b4b4]">Parent &amp; Link</div>
    </div>
  )
}

const seconds = [
  { label: '0:00s', position: '0%', shift: 'pl-2' },
  { label: '01s', position: '33.3%' },
  { label: '02s', position: '66.6%' },
  { label: '03s', position: '99.9%' },
]

const playhead = '17.5%'

function Ruler() {
  return (
    <div className="shrink-0 pt-[67px]">
      <div className="flex h-5 border-y-2 border-black">
        <div className="w-[13px] rounded-l-full bg-[#4b8ee8]" />
        <div className="relative flex-1 border-x-2 border-black bg-[#676767]">
          <span className="absolute inset-y-0 w-0.5 bg-[#58c840]" style={{ left: playhead }} />
        </div>
        <div className="w-[13px] rounded-r-full bg-[#4b8ee8]" />
      </div>
      <div className="h-10 overflow-hidden px-3.5">
        <div className="relative h-full">
          {seconds.map((mark) => (
            <div key={mark.label} className="absolute bottom-0 flex h-full w-20 -translate-x-1/2 flex-col items-center justify-between text-[19px]/[28px] text-[#a0a0a0]" style={{ left: mark.position }}>
              <span className={mark.shift}>{mark.label}</span>
              <span className="h-3 w-0.5 bg-[#b4b4b4]" />
            </div>
          ))}
        </div>
      </div>
      <div className="flex h-8 border-y-2 border-black">
        <div className="ml-0.5 w-3 rounded-l-md bg-[#4b8ee8]" />
        <div className="flex-1 bg-[#606060]" />
        <div className="mr-0.5 w-3 rounded-r-md bg-[#4b8ee8]" />
      </div>
      <div className="px-3.5">
        <div className="h-[7px] border-t-2 border-[#00e808] bg-[#59bd42]" />
      </div>
    </div>
  )
}

function KeyframeMark() {
  return (
    <svg viewBox="0 0 14 22" className="absolute top-1.5 h-[22px] w-3.5 -translate-x-1/2" style={{ left: playhead }} aria-hidden="true">
      <path d="M0 0H14V2H10V20H14V22H0V20H4V2H0Z" fill="#d0c8cc" />
    </svg>
  )
}

function Tracks() {
  return (
    <div className="relative flex min-w-0 flex-1 flex-col">
      <Ruler />
      <div className="h-[248px] shrink-0 overflow-hidden border-l-2 border-black">
        {properties.map((property) => (
          <div key={property.name} className="flex h-[34px] border-b-2 border-[#222] pl-3 pr-3.5">
            <div className="relative flex-1 bg-[#333]">{property.keyframe && <KeyframeMark />}</div>
          </div>
        ))}
      </div>
      {/* Current time indicator */}
      <div className="pointer-events-none absolute inset-x-3.5 bottom-9 top-[96px]">
        <div className="absolute inset-y-0 flex w-6 -translate-x-1/2 flex-col items-center" style={{ left: playhead }}>
          <Icon w={23} h={27} className="text-[#4b8ee8]">
            <path d="M0 0H23V13L14 27H9L0 13Z" />
            <path d="M9 12H14V15H12V27H11V15H9Z" fill="#1d3a66" />
          </Icon>
          <span className="w-[3px] flex-1 border-r border-[#4b8ee8] bg-[#42c93f]" />
        </div>
      </div>
      <div className="flex h-9 items-stretch bg-[#232323]">
        <div className="flex w-[214px] items-center border-t-2 border-black bg-[#272727] pl-3 text-[#b4b4b4]">
          <Icon w={19} h={9} className="mb-1">
            <path d="M0 9L5 3L7 5L12 0L19 9Z" />
          </Icon>
          <input
            type="range"
            aria-label="Timeline zoom"
            defaultValue={0}
            className="mx-[22px] h-5 w-[96px] appearance-none bg-transparent [&::-webkit-slider-runnable-track]:h-1 [&::-webkit-slider-runnable-track]:bg-[#444] [&::-webkit-slider-thumb]:-mt-2 [&::-webkit-slider-thumb]:size-5 [&::-webkit-slider-thumb]:appearance-none [&::-webkit-slider-thumb]:rounded-full [&::-webkit-slider-thumb]:border-[3px] [&::-webkit-slider-thumb]:border-[#a0a0a0] [&::-webkit-slider-thumb]:bg-[#272727]"
          />
          <Icon w={32} h={14} className="mb-1">
            <path d="M8 14L20 0L32 14ZM0 14L10 3L11 5L4 14Z" />
          </Icon>
        </div>
      </div>
    </div>
  )
}

function Timeline() {
  return (
    <section className="mt-2 flex shrink-0 overflow-hidden rounded-bl-lg bg-[#272727] text-[#adadad]">
      <div className="flex w-[1214px] shrink-0 flex-col">
        <TimelineTop />
        <ColumnHeader />
        <div className="h-[248px] overflow-hidden">
          {properties.map((property) => (
            <PropertyRow key={property.name} property={property} />
          ))}
        </div>
        <div className="flex h-9 items-center border-t-2 border-black text-[21px] text-[#b4b4b4]">
          <button type="button" aria-label="Layer switches" className="ml-[11px] flex h-[31px] w-8 items-center justify-center bg-[#202020] text-[#4b8ee8]">
            <Icon w={24} h={24}>
              <path d="M1 2H13V14H1ZM5 6H18V18H5ZM9 10H22V23H9Z" fill="#202020" stroke="currentColor" strokeWidth="2" />
              <circle cx="15" cy="16" r="2" />
            </Icon>
          </button>
          <button type="button" aria-label="Transfer controls" className="ml-[11px] pb-1">
            <Icon w={23} h={23}>
              <circle cx="9" cy="8" r="7" fill="none" stroke="currentColor" strokeWidth="2" />
              <path d="M9 9H21V21H9Z" fill="none" stroke="currentColor" strokeWidth="2" />
              <path d="M9 9H16Q15 15 9 15Z" />
            </Icon>
          </button>
          <button type="button" aria-label="In and out columns" className="ml-4 pb-1">
            <Icon w={23} h={23}>
              <path d="M6 0H17V23H6Z" fill="#6a6a6a" />
              <path d="M8 0L9 7L6 11L9 16L8 23M15 0L14 7L17 11L14 16L15 23" fill="none" stroke="#222" />
              <path d="M5 0V7L2 11L5 16V23M18 0V7L21 11L18 16V23" fill="none" stroke="currentColor" strokeWidth="3" />
            </Icon>
          </button>
          <button type="button" aria-label="Render time" className="ml-3.5 pb-1">
            <Icon w={26} h={20}>
              <path d="M9 0Q17 0 17 8Q16 12 12 14H20V9L17 5L19 4L21 7L22 3H24L23 7H26L22 10V16H2V14H7Q0 10 1 7Q2 0 9 0ZM0 18H21V20H0Z" />
            </Icon>
          </button>
          <span className="ml-[53px] w-[470px] whitespace-nowrap">
            Frame Render Time <span className="ml-1 font-bold text-[#7fd8b8]">17ms</span>
          </span>
          <button type="button" className="h-[31px] w-[268px] rounded-md border-2 border-[#303030] bg-[#1e1e1e] leading-none whitespace-nowrap">
            Toggle Switches / Modes
          </button>
        </div>
      </div>
      <Tracks />
      <div className="flex w-[34px] shrink-0 flex-col pt-[131px]">
        <Icon w={22} h={28} className="mx-auto">
          <path d="M0 0H22V17L11 28L0 17Z" />
        </Icon>
        <Icon w={28} h={26} className="mt-3">
          <path d="M14 5H28V20H14Z" />
          <path d="M14 2V16H2ZM2 16L14 2" fill="none" stroke="currentColor" strokeWidth="2" />
          <circle cx="13" cy="18" r="6" fill="#222" stroke="currentColor" strokeWidth="2" />
        </Icon>
        <div className="mb-9 mt-1 flex-1 bg-[#1e1e1e]">
          <div className="mt-11 h-[76px] w-[30px] rounded-full bg-[#323232]" />
        </div>
      </div>
    </section>
  )
}

export default function App() {
  return (
    <div className="flex min-h-screen flex-col overflow-hidden bg-[#171717] pb-0.5 font-['Noto_Sans','Open_Sans',sans-serif] leading-[28px]">
      <Toolbar />
      <main className="flex flex-1 flex-col pl-0.5 pr-[9px] pt-1">
        <div className="flex flex-1 gap-2">
          <ProjectPanel />
          <Viewer />
        </div>
        <Timeline />
      </main>
    </div>
  )
}
